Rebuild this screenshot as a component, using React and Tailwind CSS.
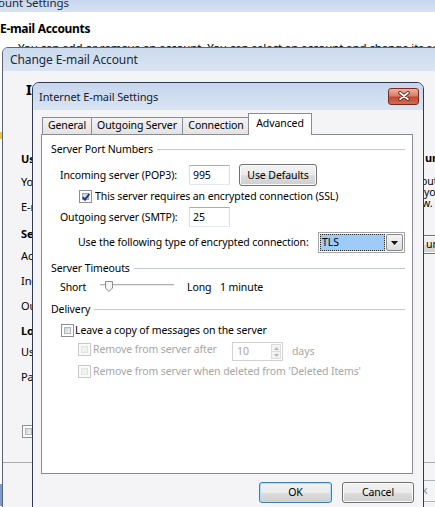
import React from "react";

function Check({ checked = false, disabled = false }) {
  return (
    <div
      className={
        disabled
          ? "relative w-[13px] h-[13px] shrink-0 border border-[#c9c9c9] bg-[#fafafa] p-[2px]"
          : "relative w-[13px] h-[13px] shrink-0 border border-[#8e8f8f] bg-white p-[2px]"
      }
    >
      <div
        className={
          disabled
            ? "w-full h-full border border-[#e3e3e3] bg-[#f1f1f1]"
            : checked
            ? "w-full h-full border border-[#9aa7bd] bg-[linear-gradient(135deg,#c9d3e6,#eef2f8)]"
            : "w-full h-full border border-[#b2b6bc] bg-[linear-gradient(135deg,#cfd2d7,#f5f5f6)]"
        }
      />
      {checked && (
        <svg className="absolute left-[1px] top-[1px]" width="10" height="10" viewBox="0 0 10 10">
          <path d="M1.8 5.2 L4 7.6 L8.4 1.8" fill="none" stroke="#233b84" strokeWidth="2" />
        </svg>
      )}
    </div>
  );
}

function WinButton({ children, def = false, className = "" }) {
  return (
    <div
      className={
        (def
          ? "border-[#3c7fb1] shadow-[inset_0_0_0_1px_#a8e2fb] "
          : "border-[#707070] shadow-[inset_0_0_0_1px_#fbfbfb] ") +
        "flex items-center justify-center rounded-[3px] border bg-[linear-gradient(to_bottom,#f2f2f2_0%,#ebebeb_50%,#dddddd_51%,#cfcfcf_100%)] " +
        className
      }
    >
      {children}
    </div>
  );
}

function GroupHeader({ children, className = "" }) {
  return (
    <div className={"flex items-center h-[14px] " + className}>
      <span className="leading-[14px] whitespace-nowrap">{children}</span>
      <div className="flex-1 h-px bg-[#c4c7cb] ml-[4px]" />
    </div>
  );
}

function TextBox({ value }) {
  return (
    <div className="w-[41px] h-[20px] border border-[#abadb3] border-l-[#dadde3] border-r-[#dadde3] border-b-[#e3e9ef] bg-white flex items-center pl-[3px] rounded-[1px]">
      {value}
    </div>
  );
}

export default function App() {
  return (
    <div className="relative w-[435px] h-[507px] overflow-hidden bg-white font-['Segoe_UI','Noto_Sans',sans-serif] text-[10.5px] tracking-[-0.1px] text-black">
      {/* Back window: Account Settings */}
      <div className="absolute inset-0 flex flex-col bg-white">
        <div className="h-[12px] shrink-0 overflow-hidden bg-[linear-gradient(to_bottom,#c7d6ec,#d6e2f2)]">
          <div className="-mt-[5px] -ml-[20px] whitespace-nowrap text-[11.5px] leading-[16px] text-[#1d2a3a]">
            Account Settings
          </div>
        </div>
        <div className="mt-[9px] h-[16px] whitespace-nowrap text-[12px] font-bold leading-[16px] tracking-[-0.3px]">
          E-mail Accounts
        </div>
        <div className="mt-[3px] ml-[18px] h-[16px] whitespace-nowrap text-[11.5px] leading-[16px]">
          You can add or remove an account. You can select an account and change its settings.
        </div>
        <div className="mt-[76px] w-[2px] h-[7px] bg-[#e8c44a]" />
        <div className="mt-[345px] w-[2px] h-[22px] bg-[#7d9bd0]" />
      </div>

      {/* Change E-mail Account window */}
      <div className="absolute left-[2px] top-[47px] w-[520px] h-[480px] flex flex-col rounded-tl-[6px] border border-[#5b6576] bg-[#f4f3f6]">
        <div className="h-[23px] shrink-0 flex items-center pl-[7px] rounded-tl-[5px] bg-[linear-gradient(to_bottom,#ccdaee,#dae5f3)]">
          <span className="text-[12px] leading-[16px] tracking-[-0.1px] text-[#1d2a3a] whitespace-nowrap">Change E-mail Account</span>
        </div>
        <div className="flex flex-col">
          <div className="mt-[9px] ml-[23px] h-[18px] text-[15px] font-bold leading-[18px] whitespace-nowrap">
            Internet E-mail Settings
          </div>
          <div className="flex">
            <div className="w-[418px] shrink-0 pl-[18px] flex flex-col whitespace-nowrap leading-[14px] text-[11px]">
              <div className="mt-[54px] h-[14px] font-bold">User Information</div>
              <div className="mt-[9px] h-[14px]">Your Name:</div>
              <div className="mt-[11px] h-[14px]">E-mail Address:</div>
              <div className="mt-[13px] h-[14px] font-bold">Server Information</div>
              <div className="mt-[8px] h-[14px]">Account Type:</div>
              <div className="mt-[11px] h-[14px]">Incoming mail server:</div>
              <div className="mt-[11px] h-[14px]">Outgoing mail server (SMTP):</div>
              <div className="mt-[11px] h-[14px] font-bold">Logon Information</div>
              <div className="mt-[7px] h-[14px]">User Name:</div>
              <div className="mt-[11px] h-[14px]">Password:</div>
              <div className="mt-[41px] h-[13px] flex items-center gap-[4px] pl-px">
                <Check />
                <span>Require logon using Secure Password Authentication (SPA)</span>
              </div>
            </div>
            <div className="flex flex-col whitespace-nowrap">
              <div className="mt-[53px] ml-[4px] h-[14px] font-bold leading-[14px] text-[11px]">unt Settings</div>
              <div className="mt-[11px] h-[11px] leading-[11px]">out the information</div>
              <div className="ml-[3px] h-[11px] leading-[11px]">you test your account</div>
              <div className="ml-[1px] h-[11px] leading-[11px]">w. (Requires network connection)</div>
              <WinButton className="mt-[26px] -ml-[30px] w-[160px] h-[19px] !justify-start pl-[34px]">
                <span>unt Settings ...</span>
              </WinButton>
            </div>
          </div>
          <div className="mt-[24px] h-px bg-[#a9a9ab]" />
          <div className="mt-[17px] flex gap-[8px] pl-[375px]">
            <div className="w-[75px] h-[22px] flex items-center justify-center rounded-[3px] border border-[#adb2b5] bg-[#f4f4f4] text-[#8d8d8d]">
              &lt; Back
            </div>
            <WinButton className="w-[75px] h-[22px]">Next &gt;</WinButton>
          </div>
        </div>
      </div>

      {/* Internet E-mail Settings dialog */}
      <div className="absolute left-[32px] top-[82px] w-[392px] h-[440px] flex flex-col rounded-t-[7px] border border-[#2f3a4c] bg-[#f4f3f6]">
        <div className="h-[27px] shrink-0 flex items-center pl-[6px] pr-[4px] rounded-t-[6px] bg-[linear-gradient(to_bottom,#c6d6ed,#d9e4f3)]">
          <span className="text-[11px] leading-[14px] text-[#15202e] whitespace-nowrap">Internet E-mail Settings</span>
          <div className="ml-auto mt-[-1px] w-[31px] h-[17px] flex items-center justify-center rounded-[3px] border border-[#7a2a1e] bg-[linear-gradient(to_bottom,#eab3a6_0%,#d9806c_45%,#c54a33_55%,#d16a54_100%)]">
            <svg width="12" height="10" viewBox="0 0 12 10">
              <path d="M2 1.8 L10 8.2 M10 1.8 L2 8.2" stroke="#5e1d14" strokeWidth="3.6" strokeLinecap="round" />
              <path d="M2 1.8 L10 8.2 M10 1.8 L2 8.2" stroke="#ffffff" strokeWidth="1.8" strokeLinecap="round" />
            </svg>
          </div>
        </div>

        <div className="flex flex-col pl-[8px] pr-[10px]">
          {/* tabs */}
          <div className="mt-[3px] h-[21px] flex items-end pl-px">
            <div className="w-[50px] h-[17px] flex items-center justify-center border border-b-0 border-[#898c95] bg-[linear-gradient(to_bottom,#f3f3f3,#e3e3e3)]">
              General
            </div>
            <div className="-ml-px w-[92px] h-[17px] flex items-center justify-center border border-b-0 border-[#898c95] bg-[linear-gradient(to_bottom,#f3f3f3,#e3e3e3)]">
              Outgoing Server
            </div>
            <div className="-ml-px w-[68px] h-[17px] flex items-center justify-center border border-b-0 border-[#898c95] bg-[linear-gradient(to_bottom,#f3f3f3,#e3e3e3)]">
              Connection
            </div>
            <div className="relative z-10 -ml-[2px] -mb-px w-[64px] h-[22px] flex items-center justify-center pb-[2px] border border-b-0 border-[#898c95] bg-white">
              Advanced
            </div>
          </div>

          {/* panel */}
          <div className="h-[340px] border border-[#898c95] bg-white flex flex-col pl-[9px] pr-[7px] leading-[13px] whitespace-nowrap">
            <GroupHeader className="mt-[7px]">Server Port Numbers</GroupHeader>

            <div className="mt-[8px] h-[22px] flex items-center">
              <span className="ml-[9px] w-[129px]">Incoming server (POP3):</span>
              <TextBox value="995" />
              <WinButton className="ml-[9px] w-[78px] h-[22px]">Use Defaults</WinButton>
            </div>

            <div className="mt-[4px] h-[13px] flex items-center">
              <div className="ml-[28px]">
                <Check checked />
              </div>
              <span className="ml-[3px]">This server requires an encrypted connection (SSL)</span>
            </div>

            <div className="mt-[4px] h-[20px] flex items-center">
              <span className="ml-[9px] w-[129px]">Outgoing server (SMTP):</span>
              <TextBox value="25" />
            </div>

            <div className="mt-[5px] h-[21px] flex items-center">
              <span className="ml-[27px] w-[240px]">Use the following type of encrypted connection:</span>
              <div className="w-[87px] h-[21px] flex border border-[#a3a7ad] bg-white p-[1px]">
                <div className="flex-1 flex items-center pl-[2px] bg-[#9fcbf8] outline outline-1 outline-dotted outline-[#2b2b2b] -outline-offset-1">
                  TLS
                </div>
                <div className="w-[17px] ml-px flex items-center justify-center rounded-[2px] border border-[#8a8a8a] bg-[linear-gradient(to_bottom,#f4f4f4,#dcdcdc)]">
                  <svg width="7" height="4" viewBox="0 0 7 4">
                    <path d="M0 0 H7 L3.5 4 Z" fill="#111" />
                  </svg>
                </div>
              </div>
            </div>

            <GroupHeader className="mt-[8px]">Server Timeouts</GroupHeader>

            <div className="mt-[5px] h-[14px] flex items-center">
              <span className="ml-[9px] w-[40px]">Short</span>
              <div className="relative w-[74px] h-[14px]">
                <div className="absolute left-0 right-0 top-[4px] h-[3px] border-t border-[#b0b0b0] border-b border-b-[#ffffff] bg-[#e9e9e9]" />
                <svg className="absolute left-[5px] top-[1px]" width="8" height="11" viewBox="0 0 8 11">
                  <path d="M0.5 0.5 H7.5 V7 L4 10.5 L0.5 7 Z" fill="#f4f4f4" stroke="#8c8c8c" />
                </svg>
              </div>
              <span className="ml-[13px] w-[33px]">Long</span>
              <span>1 minute</span>
            </div>

            <GroupHeader className="mt-[8px]">Delivery</GroupHeader>

            <div className="mt-[8px] h-[13px] flex items-center">
              <div className="ml-[10px]">
                <Check />
              </div>
              <span className="ml-px">Leave a copy of messages on the server</span>
            </div>

            <div className="mt-[5px] h-[19px] flex items-start text-[#a6a6a6]">
              <div className="ml-[27px] mt-px">
                <Check disabled />
              </div>
              <span className="ml-[2px] mt-px w-[139px] leading-[13px]">Remove from server after</span>
              <div className="w-[51px] h-[19px] flex border border-[#cfd1d4] bg-white">
                <div className="flex-1 flex items-center pl-[4px]">10</div>
                <div className="w-[12px] flex flex-col p-px">
                  <div className="flex-1 flex items-center justify-center border border-[#dcdcdc] bg-[#f3f3f3]">
                    <svg width="5" height="3" viewBox="0 0 5 3">
                      <path d="M0 3 H5 L2.5 0 Z" fill="#b5b5b5" />
                    </svg>
                  </div>
                  <div className="flex-1 flex items-center justify-center border border-t-0 border-[#dcdcdc] bg-[#f3f3f3]">
                    <svg width="5" height="3" viewBox="0 0 5 3">
                      <path d="M0 0 H5 L2.5 3 Z" fill="#b5b5b5" />
                    </svg>
                  </div>
                </div>
              </div>
              <span className="ml-[9px] mt-[3px]">days</span>
            </div>

            <div className="mt-[4px] h-[13px] flex items-center text-[#a6a6a6]">
              <div className="ml-[27px]">
                <Check disabled />
              </div>
              <span className="ml-[2px]">Remove from server when deleted from 'Deleted Items'</span>
            </div>
          </div>

          {/* buttons */}
          <div className="mt-[8px] -mr-px flex justify-end gap-[10px]">
            <WinButton def className="w-[73px] h-[21px]">OK</WinButton>
            <WinButton className="w-[72px] h-[21px]">Cancel</WinButton>
          </div>
        </div>
      </div>
    </div>
  );
}
